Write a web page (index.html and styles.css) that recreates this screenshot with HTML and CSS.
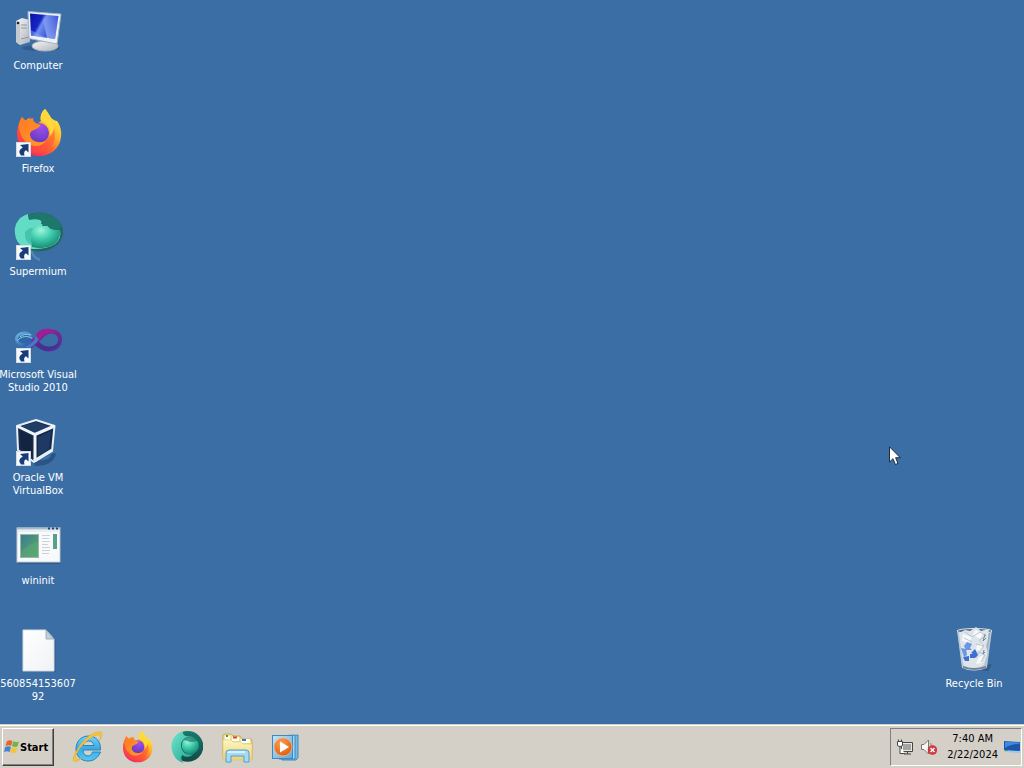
FILE: index.html
```
<!DOCTYPE html>
<html lang="en">
<head>
<meta charset="utf-8">
<title>Desktop</title>
<link rel="stylesheet" href="styles.css">
</head>
<body>
<svg class="defs" aria-hidden="true">
  <defs>
    <linearGradient id="screen" x1="0" y1="0" x2="1" y2="0.5"><stop offset="0" stop-color="#0a12a8"/><stop offset=".4" stop-color="#1626c4"/><stop offset=".5" stop-color="#6f8df0"/><stop offset="1" stop-color="#1c36d0"/></linearGradient>
    <linearGradient id="fade" x1="0" y1="0" x2="0" y2="1"><stop offset="0" stop-color="#fff" stop-opacity="0"/><stop offset="1" stop-color="#b8d4ff" stop-opacity=".6"/></linearGradient>
    <linearGradient id="metal" x1="0" y1="0" x2="1" y2="1"><stop offset="0" stop-color="#f6f7f8"/><stop offset="1" stop-color="#aeb4bc"/></linearGradient>
    <linearGradient id="fire" x1=".85" y1=".1" x2=".2" y2=".95"><stop offset="0" stop-color="#fff04a"/><stop offset=".35" stop-color="#ffb028"/><stop offset=".65" stop-color="#ff5a36"/><stop offset="1" stop-color="#f0206c"/></linearGradient>
    <linearGradient id="head" x1="0" y1="0" x2="1" y2="1"><stop offset="0" stop-color="#ff7a24"/><stop offset="1" stop-color="#ff9a28"/></linearGradient>
    <radialGradient id="globe" cx=".6" cy=".2" r=".9"><stop offset="0" stop-color="#a04ef0"/><stop offset="1" stop-color="#5a38b8"/></radialGradient>
    <linearGradient id="teal" x1="0" y1="0" x2="1" y2="1"><stop offset="0" stop-color="#6ee8cc"/><stop offset="1" stop-color="#1b9c88"/></linearGradient>
    <linearGradient id="tealDark" x1="0" y1="0" x2="0" y2="1"><stop offset="0" stop-color="#187a6c"/><stop offset="1" stop-color="#104a48"/></linearGradient>
    <radialGradient id="orb" cx=".35" cy=".25" r=".8"><stop offset="0" stop-color="#9af6dc"/><stop offset=".5" stop-color="#3cc8a8"/><stop offset="1" stop-color="#128472"/></radialGradient>
    <linearGradient id="purple" x1="0" y1="0" x2="1" y2="1"><stop offset="0" stop-color="#9c1c94"/><stop offset="1" stop-color="#4a349c"/></linearGradient>
    <linearGradient id="vsblue" x1="0" y1="0" x2="1" y2="1"><stop offset="0" stop-color="#6ab8e4"/><stop offset="1" stop-color="#2450a0"/></linearGradient>
    <linearGradient id="green" x1="0" y1="0" x2="1" y2="1"><stop offset="0" stop-color="#3a7c92"/><stop offset="1" stop-color="#5cac68"/></linearGradient>
    <linearGradient id="paper" x1="0" y1="0" x2="1" y2="1"><stop offset="0" stop-color="#fff"/><stop offset="1" stop-color="#f0f2f4"/></linearGradient>
    <linearGradient id="glass" x1="0" y1="0" x2="1" y2="0"><stop offset="0" stop-color="#aebccb"/><stop offset=".35" stop-color="#eef2f6"/><stop offset=".7" stop-color="#cfd6dd"/><stop offset="1" stop-color="#8796a6"/></linearGradient>
    <linearGradient id="ie" x1="0" y1="0" x2="0" y2="1"><stop offset="0" stop-color="#72d2f6"/><stop offset=".5" stop-color="#3aaae4"/><stop offset="1" stop-color="#56c8f2"/></linearGradient>
    <linearGradient id="folder" x1="0" y1="0" x2="0" y2="1"><stop offset="0" stop-color="#fff6c0"/><stop offset="1" stop-color="#ecd274"/></linearGradient>
    <linearGradient id="film" x1="0" y1="0" x2="1" y2="1"><stop offset="0" stop-color="#c4e4f8"/><stop offset="1" stop-color="#5ea8dc"/></linearGradient>
    <radialGradient id="orange" cx=".4" cy=".3" r=".8"><stop offset="0" stop-color="#ffa04a"/><stop offset="1" stop-color="#d8560c"/></radialGradient>
    <symbol id="shortcut" viewBox="0 0 15 15">
      <rect x=".5" y=".5" width="14" height="14" fill="#f6fafd" stroke="#d2dce6"/>
      <path d="M4 3L12.500 2V10.500L10 8.200Q7.300 9.500 8.500 13.500H5Q.8 9 6.800 5.400Z" fill="#173c78"/>
    </symbol>
    <symbol id="firefox" viewBox="0 0 48 48">
      <path d="M31 0C34 3 36 7 37 9C39 10 41 12 43 12C46 16 48 22 47 28C46 39 37 47 25 47C12 47 3 38 3 25C3 18 5 13 8 8L11 12L15 9L23 15L27 12C26 8 27 3 31 0Z" fill="url(#fire)"/>
      <circle cx="25" cy="24" r="10" fill="url(#globe)"/>
      <path d="M27 12C33 13 37 20 36 26C42 22 40 13 37 9C35 6 33 2 31 0C27 4 26 8 27 12Z" fill="#ffd83c"/>
      <path d="M8 8L12 12Q17 9 19 9Q19 12 21 14L27 16Q24 20 20 21Q16 22 16 26Q17 32 24 33Q30 34 33 30Q29 38 20 37Q8 35 5 19Q5 12 8 8Z" fill="url(#head)"/>
      <path d="M33 30Q29 38 20 37Q8 35 4 19Q1 34 13 42Q26 48 37 38Q43 30 40 20Q38 27 33 30Z" fill="#ff5038" fill-opacity=".5"/>
    </symbol>
    <symbol id="supermium" viewBox="0 0 48 48">
      <ellipse cx="25" cy="23" rx="23.500" ry="23" fill="url(#tealDark)"/>
      <path d="M18 1C4 4-2 18 2 31C5 41 11 45 19 48Q13 41 17 36Q25 42 34 35Q20 37 16 27Q12 15 23 11Q31 10 38 16Q35 7 26 8Q17 8 18 1Z" fill="url(#teal)"/>
      <circle cx="29" cy="22" r="13" fill="url(#orb)"/>
      <path d="M18 14Q23 13 27 16Q33 18 42 14Q38 8 29 8Q20 9 18 14Z" fill="#176a60" fill-opacity=".6"/>
    </symbol>
  </defs>
</svg>

<div class="screen">
  <main class="desktop">
    <div class="column">
      <button class="item" type="button">
        <svg class="icon" viewBox="0 0 48 48" aria-hidden="true">
          <ellipse cx="27" cy="40" rx="19" ry="3" fill="#1d3c60" fill-opacity=".35"/>
          <path d="M2 13L8 10L16 12V34L6 37L2 34Z" fill="url(#metal)"/>
          <path d="M2 13L6 14V37L2 34Z" fill="#c4cad0"/>
          <circle cx="4" cy="15" r="1.300" fill="#223"/>
          <path d="M7 17H13M7 20H13M7 31L15 29" stroke="#8f979f"/>
          <path d="M26 31L33 32L34 38H25Z" fill="#a8b0b8"/>
          <ellipse cx="31" cy="38" rx="13" ry="5" fill="url(#metal)" stroke="#b0b6bc"/>
          <path d="M14 3.500L47 6L43 36L15 30.500Z" fill="#edf2f6" stroke="#9fb4c6"/>
          <path d="M16 5.500L44.500 8L41 31L17 27.500Z" fill="url(#screen)"/>
          <path d="M28 7L44.500 8L41 31L33 30Z" fill="url(#fade)"/>
          <path d="M16.500 22L33 30L17 27.500Z" fill="#8ea8f0" fill-opacity=".5"/>
        </svg>
        <span class="label">Computer</span>
      </button>
      <button class="item" type="button">
        <svg class="icon" viewBox="0 0 48 48" aria-hidden="true"><use href="#firefox" x="0" y="-2" width="48" height="48"/><use href="#shortcut" x="2" y="31" width="15" height="15"/></svg>
        <span class="label">Firefox</span>
      </button>
      <button class="item" type="button">
        <svg class="icon" viewBox="0 0 48 48" aria-hidden="true">
          <path d="M17 35Q18 43 26 46" stroke="#4f8fae" stroke-width="2" fill="none"/>
          <ellipse cx="25" cy="18" rx="24" ry="19.500" fill="#24665e"/>
          <path d="M2 10Q6 2 14 0L15 5Q20 5 24 4Q29 7 27 10H33Q34 14 40 16H46Q48 25 41 30Q34 35 20 35Q3 35 1 20Q0 15 2 10Z" fill="#62dcc4"/>
          <path d="M18 33Q14 20 20 12Q26 9 33 12Q36 16 46 16Q47 26 39 31Q30 36 18 33Z" fill="url(#orb)"/>
          <path d="M18 31Q15 21 19 14Q16 13 11 18Q10 28 18 31Z" fill="#46c4ac"/>
          <path d="M14 1Q23-3 33 0Q44 3 48 12L45 16Q35 16 34 12H28L29 8Q25 4 15 6Z" fill="#1f766c"/>
          <use href="#shortcut" x="2" y="31" width="15" height="15"/>
        </svg>
        <span class="label">Supermium</span>
      </button>
      <button class="item" type="button">
        <svg class="icon" viewBox="0 0 48 48" aria-hidden="true">
          <ellipse cx="10.500" cy="22" rx="8" ry="6" fill="#2f66a8" stroke="url(#vsblue)" stroke-width="3"/>
          <path d="M3 24C7 19 14 18 19 22M17 18Q10 16 6 20" fill="none" stroke="#8cccec"/>
          <path d="M13 31C22 29 27 17 34 15C42 13 47 18 46 24C44 33 33 35 26 29C23 27 21 25 18 22" fill="none" stroke="url(#purple)" stroke-width="4"/>
          <path d="M13 32Q20 30 25 22L22 20Q18 27 12 29Z" fill="#3e7cc4"/>
          <path d="M22 18C26 10 37 10 44 16C35 14 29 17 25 23Z" fill="#9e1e98"/>
          <path d="M21 28C29 37 41 35 46 25C40 30 32 32 25 25Z" fill="#493090"/>
          <use href="#shortcut" x="2" y="31" width="15" height="15"/>
        </svg>
        <span class="label">Microsoft Visual Studio 2010</span>
      </button>
      <button class="item" type="button">
        <svg class="icon" viewBox="0 0 48 48" aria-hidden="true">
          <path d="M19 40Q37 42 37 34L42 33Q40 46 21 46Z" fill="#234878" fill-opacity=".7"/>
          <path d="M22 0L40.500 6L38 31L20 42L4 30L3 6Z" fill="#15294a" stroke="#e6eef6" stroke-width="2" stroke-linejoin="round"/>
          <path d="M7 6L22 2L37 7L21 13Z" fill="#203d68"/>
          <path d="M3 6L21 14.500L40.500 6M21 14V42" stroke="#eef4f9" stroke-width="3" fill="none"/>
          <path d="M6 11L18 17V35L7 28Z" fill="#122442"/>
          <path d="M24 17L37 11L35 29L24 36Z" fill="#1d3964"/>
          <path d="M38 30L20 41" stroke="#e6eef6" stroke-width="3"/>
          <use href="#shortcut" x="2" y="31" width="15" height="15"/>
        </svg>
        <span class="label">Oracle VM VirtualBox</span>
      </button>
      <button class="item" type="button">
        <svg class="icon" viewBox="0 0 48 48" aria-hidden="true">
          <rect x="4" y="6" width="43" height="35" fill="#1d3c60" fill-opacity=".4"/>
          <rect x="3" y="5" width="43" height="34" fill="#f7f9fa" stroke="#c2ccd4"/>
          <path d="M3 5.500H46" stroke="#a9bccb" stroke-width="2"/>
          <path d="M34 5.500H36M38 5.500H40M42 5.500H44" stroke="#274668" stroke-width="2"/>
          <path d="M4 8H45" stroke="#dce4ea"/>
          <rect x="6.500" y="11.500" width="18" height="23" fill="url(#green)" stroke="#9db4ac"/>
          <path d="M7 29Q15 20 24 19V34H7Z" fill="#5bac72" fill-opacity=".5"/>
          <path d="M28 12.500H36M28 15.500H35M28 18.500H36M28 21.500H34M28 24.500H36M28 27.500H36M28 30.500H35" stroke="#cbd3da"/>
          <rect x="39" y="11" width="4" height="15" fill="#58a08c"/>
        </svg>
        <span class="label">wininit</span>
      </button>
      <button class="item" type="button">
        <svg class="icon" viewBox="0 0 48 48" aria-hidden="true">
          <path d="M10 5H33L41.500 14V46H10Z" fill="#1d3c60" fill-opacity=".35"/>
          <path d="M9 4H32L40 13V45H9Z" fill="url(#paper)" stroke="#d5dde4"/>
          <path d="M32 4V13H40Z" fill="#c3ced8" stroke="#8fa3b6" stroke-width=".8"/>
        </svg>
        <span class="label">56085415360792</span>
      </button>
    </div>
    <div class="column column-end">
      <button class="item" type="button">
        <svg class="icon" viewBox="0 0 48 48" aria-hidden="true">
          <path d="M14 43L38 45L42 38Z" fill="#1d3c60" fill-opacity=".4"/>
          <path d="M7 4H42L37 42Q24 47 12 42Z" fill="url(#glass)"/>
          <ellipse cx="24.500" cy="5" rx="17.500" ry="2.500" fill="#55697c" stroke="#d9e2ea"/>
          <path d="M9 7L15 4L20 5L26 1L31 5L39 3L38 13L36 20L38 27L34 39Q25 43 14 40L11 26Z" fill="#dde4eb"/>
          <path d="M13 8L22 11L19 17L12 15ZM25 4L33 7L30 13L23 9ZM27 19L33 17L31 25L26 24ZM28 32L33 29L32 37L26 38Z" fill="#f7f9fb"/>
          <path d="M15 6L22 11L30 6L36 10L29 14L34 20L26 18M34 20L29 26L35 29L31 36M14 12L22 16M29 26L26 32" stroke="#bac5cf" fill="none"/>
          <path d="M35 8L33 15L36 12M34 24L33 28L35 26" stroke="#74879a" fill="none"/>
          <path d="M8 6L13 41M41 6L36 41" stroke="#b9cad9" stroke-width="1.300"/>
          <path d="M13 41Q24 45 36 41" stroke="#738496" stroke-width="2" fill="none"/>
          <g fill="#3c6fd0"><path d="M14 20L17 16L22 18L20 22L22 24H16Z" fill="#6b97e0"/><path d="M11 22L16 23L17 29L14 31Z" fill="#6b97e0"/><path d="M21 27L25 23L28 29L25 32H20V28H23Z"/><path d="M13 31L19 30V35L15 35Z"/></g>
        </svg>
        <span class="label">Recycle Bin</span>
      </button>
    </div>
    <svg class="cursor" viewBox="0 0 12 20" aria-hidden="true"><path d="M.5 .8V16L4 12.700L6.400 18.500L9 17.400L6.600 11.700H11.300Z" fill="#fff" stroke="#10202f" stroke-width=".9"/></svg>
  </main>

  <footer class="taskbar">
    <button class="start" type="button">
      <svg class="flag" viewBox="0 0 16 16" aria-hidden="true">
        <path d="M3 2Q6 .5 8.500 2L7.200 7Q4.500 5.700 1.500 7Z" fill="#e8642c"/>
        <path d="M9.300 2.300Q12 3.800 15 2.500L13.500 7.600Q11 8.600 8 7.300Z" fill="#72b544"/>
        <path d="M1.200 8Q4.300 6.700 7 8L5.600 13Q3 11.700 0 13Z" fill="#4482d2"/>
        <path d="M7.700 8.300Q10.500 9.700 13.300 8.500L12 13.600Q9 14.700 6.300 13.300Z" fill="#f5c33a"/>
      </svg>
      <span>Start</span>
    </button>
    <nav class="quick" aria-label="Quick launch">
      <button class="launch" type="button" aria-label="Internet Explorer">
        <svg viewBox="0 0 32 32" aria-hidden="true">
          <path d="M21.500 21H29.500C27 27 22.500 30 17 30C10 30 5 25 5 18C5 10 10.500 5 17.500 5C25 5 30 10.500 29.500 19H12C12 22.500 14 25 17 25C19 25 20.800 23.500 21.500 21ZM12 14.500H23C22.500 11.500 20.500 10 17.500 10C14.500 10 12.500 12 12 14.500Z" fill="url(#ie)" stroke="#2584bf"/>
          <path d="M5 21C-1 31 3 33 11 27C4 30 3 27 7 20C13 10 24 3 28 4C30 4.500 30 7 28 10C33 3 31 0 27 1C19 2 10 11 5 21Z" fill="#f6c439" stroke="#e2a527" stroke-width=".5"/>
        </svg>
      </button>
      <button class="launch" type="button" aria-label="Firefox"><svg viewBox="0 0 48 48" aria-hidden="true"><use href="#firefox" width="48" height="48"/></svg></button>
      <button class="launch" type="button" aria-label="Supermium"><svg viewBox="0 0 48 48" aria-hidden="true"><use href="#supermium" width="48" height="48"/></svg></button>
      <button class="launch" type="button" aria-label="Windows Explorer">
        <svg viewBox="0 0 32 32" aria-hidden="true">
          <path d="M2 28V4L4 3H10L12 5H19L21 8H30L31 10V28Z" fill="#f2df94" stroke="#c9ac55"/>
          <path d="M4 5H9V9H4ZM11 6H18V10H11ZM20 8H29V12H20Z" fill="#fffdf0"/>
          <path d="M5 5H7" stroke="#3c9c4c" stroke-width="2"/><path d="M12 6.500H16" stroke="#d04838" stroke-width="2"/><path d="M21 9H25" stroke="#3a78c8" stroke-width="2"/>
          <path d="M2 9H10L12 11H20L22 13H31V29H2Z" fill="url(#folder)" stroke="#dcc272" stroke-width=".6"/>
          <path d="M5 31V22Q5 19 8 19H25Q28 19 28 22V31H23V25H10V31Z" fill="#a6daf4" stroke="#559fce"/>
          <path d="M7 22Q7 21 9 21H24" stroke="#e8f8ff" stroke-width="1.500" fill="none"/>
        </svg>
      </button>
      <button class="launch" type="button" aria-label="Windows Media Player">
        <svg viewBox="0 0 32 32" aria-hidden="true">
          <path d="M11 6L27 4V27L25 29H11Z" fill="#78b8e2" stroke="#3f88bd"/>
          <path d="M8 5L24 4V28H8Z" fill="#a8d6f2" stroke="#3f88bd"/>
          <rect x="1.500" y="4.500" width="20" height="23" fill="url(#film)" stroke="#3f88bd"/>
          <circle cx="12" cy="16" r="9" fill="url(#orange)" stroke="#f7b684" stroke-width=".8"/>
          <path d="M9 10.500V21.500L18 16Z" fill="#fff"/>
        </svg>
      </button>
    </nav>
    <div class="tray">
      <svg class="tray-icon" viewBox="0 0 16 16" aria-label="Network" role="img">
        <path d="M4.500 3.500H15.500V12.500H4.500Z" fill="#e8e8e4" stroke="#454545"/>
        <rect x="6" y="5" width="8" height="6" fill="#a4a4a0"/>
        <path d="M7 15H14M10.500 13V15" stroke="#454545"/>
        <path d="M.5 2.500H5.500V6Q5.500 7.500 3 7.500Q.5 7.500 .5 6ZM1.500 .5V2.500M4.500 .5V2.500M3 8V14.500H8" fill="#fff" stroke="#454545"/>
      </svg>
      <svg class="tray-icon" viewBox="0 0 16 16" aria-label="Volume muted" role="img">
        <path d="M.5 5.500H3L7.500 1V15L3 10.500H.5Z" fill="#f6f6f4" stroke="#777"/>
        <path d="M9.500 4Q11 6 10 9" stroke="#888" fill="none"/>
        <circle cx="11.500" cy="11" r="4.500" fill="#d83840" stroke="#b22830" stroke-width=".5"/>
        <path d="M9.500 9L13.500 13M13.500 9L9.500 13" stroke="#fff" stroke-width="1.400"/>
      </svg>
      <div class="clock"><time>7:40 AM</time><time datetime="2024-02-22">2/22/2024</time></div>
      <button class="show-desktop" type="button" aria-label="Show desktop">
        <svg viewBox="0 0 16 16" aria-hidden="true"><path d="M0 2L16 3V13L0 12Z" fill="#1d55a8"/><path d="M1 2.500L15.500 3.500V5Q7 5 1 9Z" fill="#3d88e0"/><path d="M0 11L16 12V14L0 13Z" fill="#9cc8ee"/><path d="M1 11.500H4" stroke="#4ca840"/></svg>
      </button>
    </div>
  </footer>
</div>
</body>
</html>
```
FILE: styles.css
```
* {
  box-sizing: border-box;
}

body {
  margin: 0;
  font-family: "DejaVu Sans Condensed", "DejaVu Sans", sans-serif;
  font-size: 11px;
  line-height: 13px;
}

button {
  padding: 0;
  border: 0;
  background: none;
  color: inherit;
  font: inherit;
}

.defs {
  position: absolute;
  width: 0;
  height: 0;
}

.screen {
  display: flex;
  flex-direction: column;
  min-height: 100vh;
  overflow: hidden;
  background: #3b6ea5;
}

.desktop {
  position: relative;
  display: flex;
  flex: 1;
  justify-content: space-between;
  padding: 8px 12px 0 0;
}

.column {
  display: grid;
  grid-template-columns: 76px;
  grid-template-rows: repeat(6, 103px) auto;
  align-content: start;
}

.column-end .item {
  grid-row: 7;
}

.item {
  display: flex;
  flex-direction: column;
  align-items: center;
  gap: 3px;
  color: #fff;
}

.icon {
  width: 48px;
  height: 48px;
  overflow: visible;
}

.label {
  width: 80px;
  text-align: center;
  overflow-wrap: anywhere;
}

.cursor {
  position: absolute;
  left: 889px;
  top: 446px;
  width: 12px;
  height: 20px;
}

.taskbar {
  display: flex;
  align-items: stretch;
  height: 44px;
  padding: 3px 2px 2px;
  border-top: 1px solid #d4d0c8;
  background: #d4d0c8;
  box-shadow: inset 0 1px #fff;
}

.start {
  display: flex;
  align-items: center;
  width: 52px;
  padding-left: 1px;
  border: 1px solid;
  border-color: #fff #404040 #404040 #fff;
  box-shadow: inset -1px -1px #808080;
  color: #000;
  font-weight: bold;
}

.flag {
  width: 16px;
  height: 16px;
}

.quick {
  display: flex;
  flex: 1;
  align-items: center;
  gap: 18px;
  padding-left: 17px;
}

.launch,
.launch svg {
  display: block;
  width: 32px;
  height: 32px;
}

.tray {
  display: flex;
  align-items: center;
  gap: 6px;
  padding: 0 1px 0 6px;
  border: 1px solid;
  border-color: #808080 #fff #fff #808080;
}

.tray-icon,
.show-desktop,
.show-desktop svg {
  display: block;
  width: 16px;
  height: 16px;
}

.tray-icon {
  margin-right: 2px;
}

.clock {
  display: flex;
  flex-direction: column;
  align-items: center;
  padding-left: 2px;
  line-height: 16px;
}
```
